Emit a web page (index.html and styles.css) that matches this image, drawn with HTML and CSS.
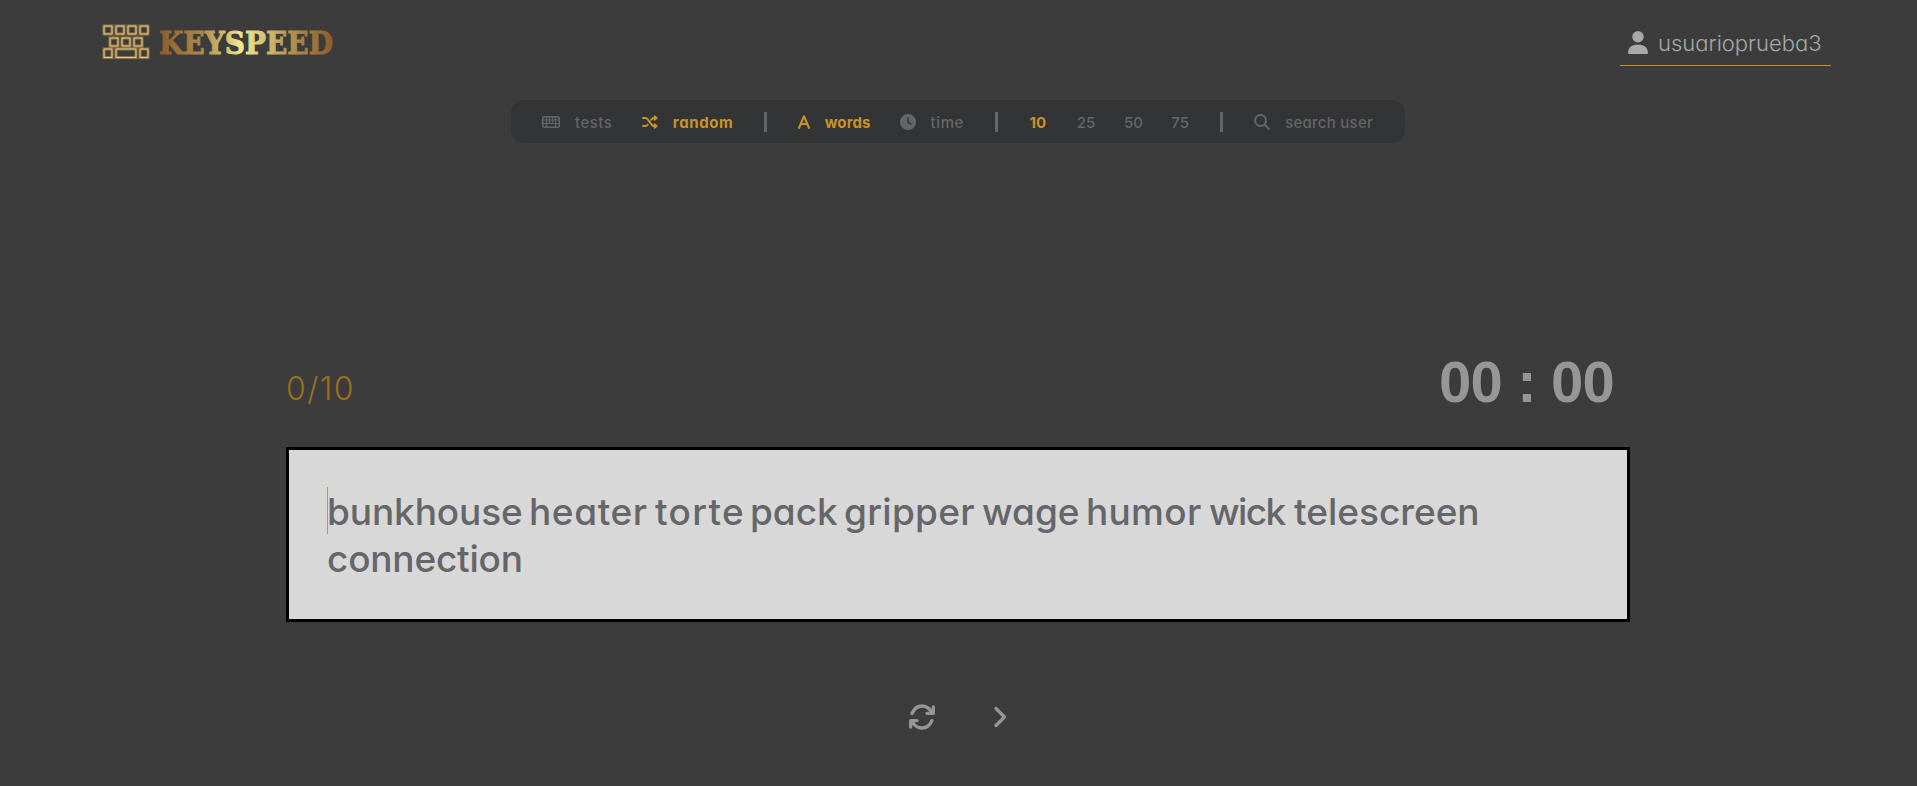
FILE: index.html
```html
<!DOCTYPE html>
<html lang="en">
<head>
<meta charset="utf-8">
<title>KeySpeed</title>
<link rel="stylesheet" href="styles.css">
</head>
<body>
<header class="header">
  <a class="brand">
    <svg class="brand-mark" width="48" height="36" viewBox="0 0 48 36">
      <defs>
        <linearGradient id="gold" x1="0" x2="1" y1="0" y2="0">
          <stop offset="0" stop-color="#8d5c2c"/><stop offset=".25" stop-color="#ad8c4b"/>
          <stop offset=".48" stop-color="#f1e792"/><stop offset=".75" stop-color="#b5944f"/>
          <stop offset="1" stop-color="#8d5c2c"/>
        </linearGradient>
      </defs>
      <g class="keys-glow">
        <path d="M2 2h8v8h-8zM14 2h8v8h-8zM26 2h8v8h-8zM38 2h8v8h-8zM8 14h8v8h-8zM20 14h8v8h-8zM32 14h8v8h-8zM2 25h8v8.500h-8zM14 25h20v8.500h-20zM38 25h8v8.500h-8z"/>
      </g>
      <g class="keys-line">
        <path d="M2 2h8v8h-8zM14 2h8v8h-8zM26 2h8v8h-8zM38 2h8v8h-8zM8 14h8v8h-8zM20 14h8v8h-8zM32 14h8v8h-8zM2 25h8v8.500h-8zM14 25h20v8.500h-20zM38 25h8v8.500h-8z"/>
      </g>
    </svg>
    <svg class="brand-name" width="260" height="60" viewBox="0 0 260 60">
      <text x="0" y="30" textLength="174" lengthAdjust="spacingAndGlyphs" fill="url(#gold)" stroke="url(#gold)" stroke-width="1">KEYSPEED</text>
    </svg>
  </a>
  <a class="user">
    <svg width="20" height="23" viewBox="0 0 448 512" preserveAspectRatio="none"><path fill="currentColor" d="M224 256A128 128 0 1 0 224 0a128 128 0 1 0 0 256zm-45.700 48C79.800 304 0 383.800 0 482.300C0 498.700 13.300 512 29.700 512H418.300c16.400 0 29.700-13.300 29.700-29.700C448 383.800 368.200 304 269.700 304H178.300z"/></svg>
    <span>usuarioprueba3</span>
  </a>
</header>

<nav class="menu">
  <a class="item tests">
    <svg width="18" height="12" viewBox="0 0 18 12" fill="none" stroke="currentColor"><rect x=".75" y=".75" width="16.500" height="10.500" rx="1.500" stroke-width="1.500"/><path d="M1 4h16M1 7.500h16M4.500 1v10M7.500 1v7M10.500 1v7M13.500 1v10" stroke-width="1.200"/></svg>
    <span>tests</span>
  </a>
  <a class="item random on">
    <svg width="16" height="14" viewBox="0 0 16 14" fill="none" stroke="currentColor" stroke-width="2" stroke-linecap="round" stroke-linejoin="round"><path d="M1 3h2.500c1 0 1.600.5 2.200 1.300l4 5.400c.6.800 1.200 1.300 2.200 1.300H14M1 11h2.500c1 0 1.600-.5 2.200-1.300M9.200 4.800l.5-.5C10.300 3.500 10.900 3 11.900 3H14"/><path d="M12.500 1 15 3l-2.500 2zM12.500 9l2.500 2-2.500 2z" fill="currentColor" stroke-width="1.600"/></svg>
    <span>random</span>
  </a>
  <i class="bar"></i>
  <a class="item words on">
    <svg width="12" height="14" viewBox="0 0 12 14" fill="none" stroke="currentColor" stroke-width="2" stroke-linecap="round" stroke-linejoin="round"><path d="M1 13 6 1.200 11 13M2.700 9h6.600"/></svg>
    <span>words</span>
  </a>
  <a class="item time">
    <svg width="16" height="16" viewBox="0 0 512 512"><path fill="currentColor" d="M256 0a256 256 0 1 1 0 512A256 256 0 1 1 256 0zM232 120V256c0 8 4 15.500 10.700 20l96 64c11 7.400 25.900 4.400 33.300-6.700s4.400-25.900-6.700-33.300L280 243.200V120c0-13.300-10.700-24-24-24s-24 10.700-24 24z"/></svg>
    <span>time</span>
  </a>
  <i class="bar"></i>
  <div class="counts">
    <a class="on">10</a><a>25</a><a>50</a><a>75</a>
  </div>
  <i class="bar"></i>
  <a class="item search">
    <svg width="16" height="16" viewBox="0 0 16 16" fill="none" stroke="currentColor" stroke-width="1.900" stroke-linecap="round"><circle cx="6.500" cy="6.500" r="5.500"/><path d="m10.500 10.500 4.600 4.600"/></svg>
    <span>search user</span>
  </a>
</nav>

<main class="game">
  <div class="status">
    <span class="progress">0/10</span>
    <span class="timer">00 : 00</span>
  </div>
  <div class="board">
    <i class="caret"></i>
    <span class="w w1">bunkhouse</span><span class="w w2">heater</span><span class="w w3">torte</span><span class="w w4">pack</span><span class="w w5">gripper</span><span class="w w6">wage</span><span class="w w7">humor</span><span class="w w8">wick</span><span class="w w9">telescreen</span>
    <span class="w w10">connection</span>
  </div>
  <div class="actions">
    <svg width="26" height="26" viewBox="0 0 26 26" fill="none" stroke="currentColor" stroke-width="3.300" stroke-linecap="round" stroke-linejoin="round"><path d="M3 9.500C5 5 8.500 2 13 2c4 0 7.500 2.500 9.500 6M24.300 3v6.300H18M23 16.500c-2 4.500-5.500 7.500-10 7.500-4 0-7.500-2.500-9.500-6M1.700 23v-6.300H8"/><path d="m24.300 5-4 4.300h4zM1.700 21l4-4.300h-4z" fill="currentColor" stroke-width="1"/></svg>
    <svg width="14" height="22" viewBox="0 0 14 22" fill="none" stroke="currentColor" stroke-width="3.300" stroke-linecap="round" stroke-linejoin="round"><path d="m3 2.500 8.500 8.500L3 19.500"/></svg>
  </div>
</main>
</body>
</html>
```
FILE: styles.css
```css
* { box-sizing: border-box; }
body {
  margin: 0;
  height: 786px;
  overflow: hidden;
  background: #3c3c3c;
  color: #646669;
  font-family: Inter, "Liberation Sans", sans-serif;
  font-feature-settings: "cv11";
}
svg { display: block; flex: none; }

.header {
  display: flex;
  justify-content: space-between;
  padding: 24px 86px 0 102px;
  height: 100px;
}
.brand { display: flex; gap: 9px; }
.keys-glow { fill: none; stroke: #8f7340; stroke-width: 3; }
.keys-line { fill: none; stroke: #dccb87; stroke-width: 1; }
.brand-name { overflow: visible; }
.brand-name text { font: bold 32px "DejaVu Serif", serif; }
.user {
  display: flex;
  align-items: center;
  gap: 10px;
  width: 211px;
  height: 42px;
  padding: 0 0 4px 8px;
  border-bottom: 1px solid #c8911a;
  color: #a8a8a8;
  font-size: 22px;
  font-weight: 350;
  white-space: nowrap;
}
.user svg { margin-top: -1px; }

.menu {
  display: flex;
  align-items: center;
  width: 894px;
  height: 43px;
  margin-left: 511px;
  padding: 1px 32px 0 31px;
  border-radius: 13px;
  background: #333435;
  font-size: 15px;
  font-weight: 550;
  line-height: 20px;
}
.item { display: flex; align-items: center; white-space: nowrap; }
.item svg { margin: -1px 15px 0 0; }
.item span, .counts a { position: relative; top: 1px; }
.on { color: #c9932a; font-weight: 650; }
.tests { width: 100px; letter-spacing: .5px; }
.random { width: 122px; letter-spacing: .6px; }
.words { width: 102px; letter-spacing: .1px; }
.time { width: 96px; letter-spacing: .6px; }
.search { letter-spacing: .25px; }
.bar { width: 3px; height: 20px; background: #646669; margin-right: 31px; }
.counts { display: flex; width: 191px; }
.counts a { width: 47.300px; }

.game { padding-left: 286px; width: 1630px; }
.status {
  display: flex;
  justify-content: space-between;
  align-items: flex-end;
  height: 304px;
  padding: 0 16px 36px 0;
}
.progress { font-size: 32px; font-weight: 300; line-height: 44px; letter-spacing: 1.400px; color: #99701f; }
.timer { font: bold 58px/58px "Liberation Sans", sans-serif; letter-spacing: -.8px; color: #969696; }
.board {
  position: relative;
  height: 175px;
  padding: 38px 38px 36px;
  border: 3px solid #000;
  background: #d8d8d8;
  color: #646669;
  font-size: 37px;
  font-weight: 500;
  line-height: 47px;
}
.caret { position: absolute; left: 38px; top: 37px; width: 1px; height: 47px; background: #c8952a; }
.w { display: inline-block; white-space: nowrap; }
.w1 { width: 202px; letter-spacing: -.1px; }
.w2 { width: 126px; letter-spacing: .6px; }
.w3 { width: 95px; letter-spacing: 1.300px; }
.w4 { width: 94px; }
.w5 { width: 138px; letter-spacing: .3px; }
.w6 { width: 104px; }
.w7 { width: 123px; letter-spacing: .3px; }
.w8 { width: 85px; letter-spacing: -1.600px; }
.w9 { width: 190px; }
.w10 { letter-spacing: -.2px; }
.actions {
  display: flex;
  align-items: center;
  gap: 58px;
  padding: 82px 0 0 623px;
  color: #969696;
}
```
